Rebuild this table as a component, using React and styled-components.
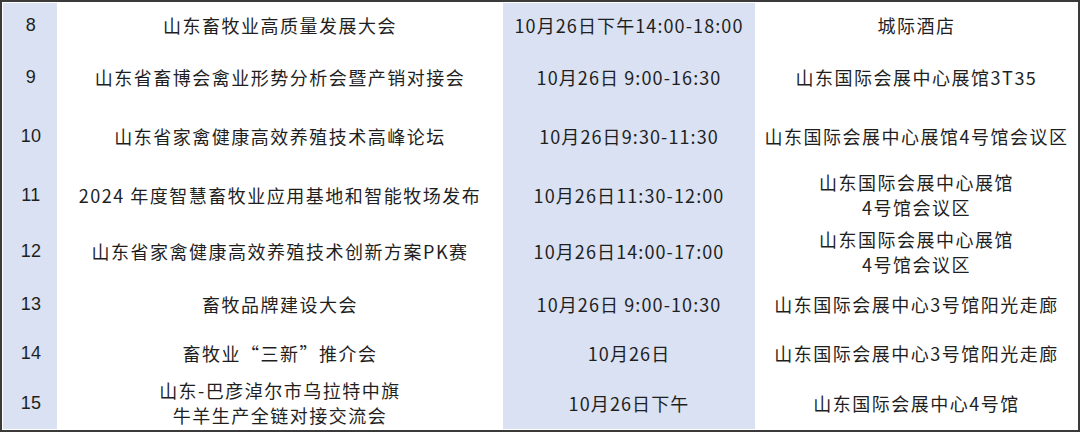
import React from "react";
import styled, { createGlobalStyle } from "styled-components";

const Global = createGlobalStyle`
  html, body { margin: 0; padding: 0; background: #ffffff; }
  body { font-family: "Noto Sans CJK SC", "Noto Sans", sans-serif; }
`;

const Table = styled.div`
  box-sizing: border-box;
  width: 1080px;
  height: 432px;
  border: 2px solid #3a3a3a;
  padding: 1px 0 0 1px;
  background: #ffffff;
  overflow: hidden;
  display: flex;
  flex-direction: column;
`;

const Row = styled.div`
  display: grid;
  grid-template-columns: 54px 446px 252px 1fr;
  height: ${(p) => p.$h}px;
  flex: none;
`;

const Cell = styled.div`
  display: flex;
  flex-direction: column;
  align-items: center;
  justify-content: center;
  text-align: center;
  color: #1f1f1f;
  font-family: "Noto Sans CJK SC", sans-serif;
  font-size: 18px;
  letter-spacing: 1.5px;
  line-height: 25px;
  white-space: nowrap;
  background: ${(p) => (p.$shade ? "#d9e1f2" : "#ffffff")};
  padding-bottom: ${(p) => p.$lift || 0}px;
`;

const NumCell = styled(Cell)`
  font-family: "Liberation Sans", "Noto Sans CJK SC", sans-serif;
  font-size: 18px;
  letter-spacing: 0.3px;
  padding-left: 2px;
`;

const TimeCell = styled(Cell)`
  letter-spacing: 1.1px;
`;

const rows = [
  { n: "8", h: 48, lift: 4, title: ["山东畜牧业高质量发展大会"], time: "10月26日下午14:00-18:00", place: ["城际酒店"] },
  { n: "9", h: 56, lift: 3, title: ["山东省畜博会禽业形势分析会暨产销对接会"], time: "10月26日 9:00-16:30", place: ["山东国际会展中心展馆3T35"] },
  { n: "10", h: 59, title: ["山东省家禽健康高效养殖技术高峰论坛"], time: "10月26日9:30-11:30", place: ["山东国际会展中心展馆4号馆会议区"] },
  { n: "11", h: 58, title: ["2024 年度智慧畜牧业应用基地和智能牧场发布"], time: "10月26日11:30-12:00", place: ["山东国际会展中心展馆", "4号馆会议区"] },
  { n: "12", h: 55, title: ["山东省家禽健康高效养殖技术创新方案PK赛"], time: "10月26日14:00-17:00", place: ["山东国际会展中心展馆", "4号馆会议区"] },
  { n: "13", h: 50, title: ["畜牧品牌建设大会"], time: "10月26日 9:00-10:30", place: ["山东国际会展中心3号馆阳光走廊"] },
  { n: "14", h: 48, title: ["畜牧业“三新”推介会"], time: "10月26日", place: ["山东国际会展中心3号馆阳光走廊"] },
  { n: "15", h: 52, title: ["山东-巴彦淖尔市乌拉特中旗", "牛羊生产全链对接交流会"], time: "10月26日下午", place: ["山东国际会展中心4号馆"] },
];

export default function App() {
  return (
    <>
      <Global />
      <Table>
        {rows.map((r) => (
          <Row key={r.n} $h={r.h}>
            <NumCell $shade $lift={r.lift}>{r.n}</NumCell>
            <Cell $lift={r.lift}>
              {r.title.map((t) => (
                <span key={t}>{t}</span>
              ))}
            </Cell>
            <TimeCell $shade $lift={r.lift}>{r.time}</TimeCell>
            <Cell $lift={r.lift}>
              {r.place.map((t) => (
                <span key={t}>{t}</span>
              ))}
            </Cell>
          </Row>
        ))}
      </Table>
    </>
  );
}
